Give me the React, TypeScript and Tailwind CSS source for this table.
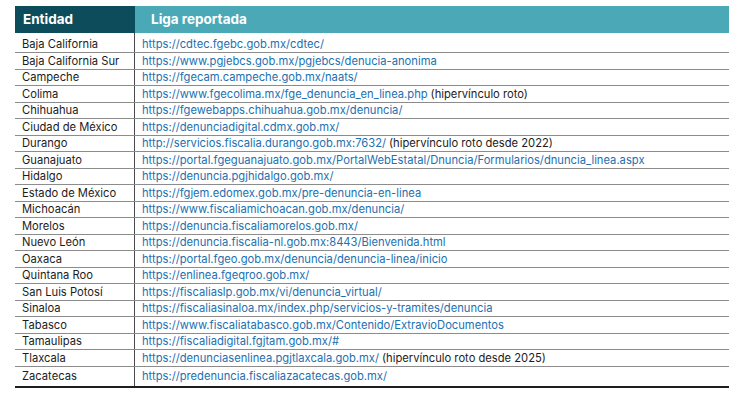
import React from "react";

const rows: { e: string; url: string; note?: string }[] = [
  { e: "Baja California", url: "https://cdtec.fgebc.gob.mx/cdtec/" },
  { e: "Baja California Sur", url: "https://www.pgjebcs.gob.mx/pgjebcs/denucia-anonima" },
  { e: "Campeche", url: "https://fgecam.campeche.gob.mx/naats/" },
  { e: "Colima", url: "https://www.fgecolima.mx/fge_denuncia_en_linea.php", note: "(hipervínculo roto)" },
  { e: "Chihuahua", url: "https://fgewebapps.chihuahua.gob.mx/denuncia/" },
  { e: "Ciudad de México", url: "https://denunciadigital.cdmx.gob.mx/" },
  { e: "Durango", url: "http://servicios.fiscalia.durango.gob.mx:7632/", note: "(hipervínculo roto desde 2022)" },
  { e: "Guanajuato", url: "https://portal.fgeguanajuato.gob.mx/PortalWebEstatal/Dnuncia/Formularios/dnuncia_linea.aspx" },
  { e: "Hidalgo", url: "https://denuncia.pgjhidalgo.gob.mx/" },
  { e: "Estado de México", url: "https://fgjem.edomex.gob.mx/pre-denuncia-en-linea" },
  { e: "Michoacán", url: "https://www.fiscaliamichoacan.gob.mx/denuncia/" },
  { e: "Morelos", url: "https://denuncia.fiscaliamorelos.gob.mx/" },
  { e: "Nuevo León", url: "https://denuncia.fiscalia-nl.gob.mx:8443/Bienvenida.html" },
  { e: "Oaxaca", url: "https://portal.fgeo.gob.mx/denuncia/denuncia-linea/inicio" },
  { e: "Quintana Roo", url: "https://enlinea.fgeqroo.gob.mx/" },
  { e: "San Luis Potosí", url: "https://fiscaliaslp.gob.mx/vi/denuncia_virtual/" },
  { e: "Sinaloa", url: "https://fiscaliasinaloa.mx/index.php/servicios-y-tramites/denuncia" },
  { e: "Tabasco", url: "https://www.fiscaliatabasco.gob.mx/Contenido/ExtravioDocumentos" },
  { e: "Tamaulipas", url: "https://fiscaliadigital.fgjtam.gob.mx/#" },
  { e: "Tlaxcala", url: "https://denunciasenlinea.pgjtlaxcala.gob.mx/", note: "(hipervínculo roto desde 2025)" },
  { e: "Zacatecas", url: "https://predenuncia.fiscaliazacatecas.gob.mx/" },
];

export default function App() {
  return (
    <div
      className="w-[750px] h-[412px] bg-white pl-[15px] pt-[6px]"
      style={{ fontFamily: "Inter, 'Liberation Sans', sans-serif" }}
    >
      <div className="w-[714px] flex flex-col">
        <div className="flex h-[27px]">
          <div className="w-[120px] bg-[#0d4c5b] text-white font-bold text-[13.5px] flex items-center pl-[8px]">
            Entidad
          </div>
          <div className="flex-1 bg-[#4aa8b7] text-white font-bold text-[13.5px] flex items-center pl-[16px]">
            Liga reportada
          </div>
        </div>
        <div className="flex h-[3.5px]">
          <div className="w-[120px] border-r border-[#4a4a4a]" />
          <div className="flex-1" />
        </div>
        {rows.map((r, i) => {
          const last = i === rows.length - 1;
          return (
            <div
              key={r.e}
              className={
                last
                  ? "flex h-[21px] border-b-2 border-[#1e1e1e]"
                  : "flex h-[16.5px] border-b border-[#8c8c8c]"
              }
            >
              <div className="w-[120px] border-r border-[#4a4a4a] flex items-center pl-[7px] text-[11.2px] text-[#1c1c1c] pt-[1px]">
                {r.e}
              </div>
              <div className="flex-1 flex items-center pl-[7px] text-[11.2px] whitespace-nowrap pt-[1px]">
                <span className="text-[#2270b0]">{r.url}</span>
                {r.note && <span className="text-[#1c1c1c] ml-[3px]">{r.note}</span>}
              </div>
            </div>
          );
        })}
      </div>
    </div>
  );
}
